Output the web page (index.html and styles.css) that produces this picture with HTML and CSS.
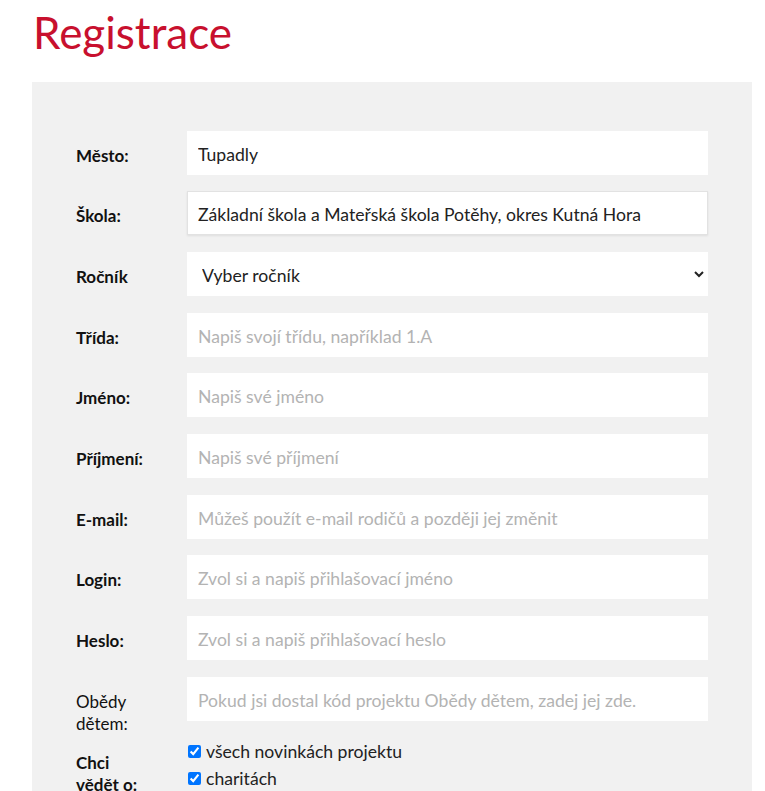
FILE: index.html
```html
<!DOCTYPE html>
<html lang="cs">
<head>
<meta charset="utf-8">
<title>Registrace</title>
<link rel="stylesheet" href="styles.css">
</head>
<body>
<h1 class="title">Registrace</h1>
<div class="panel">
  <form class="form">
    <label class="lbl">Město:</label>
    <input class="field" type="text" value="Tupadly">

    <label class="lbl">Škola:</label>
    <input class="field field-focus" type="text" value="Základní škola a Mateřská škola Potěhy, okres Kutná Hora">

    <label class="lbl">Ročník</label>
    <select class="field select">
      <option>Vyber ročník</option>
    </select>

    <label class="lbl">Třída:</label>
    <input class="field" type="text" placeholder="Napiš svojí třídu, například 1.A">

    <label class="lbl">Jméno:</label>
    <input class="field" type="text" placeholder="Napiš své jméno">

    <label class="lbl">Příjmení:</label>
    <input class="field" type="text" placeholder="Napiš své příjmení">

    <label class="lbl">E-mail:</label>
    <input class="field" type="text" placeholder="Můžeš použít e-mail rodičů a později jej změnit">

    <label class="lbl">Login:</label>
    <input class="field" type="text" placeholder="Zvol si a napiš přihlašovací jméno">

    <label class="lbl">Heslo:</label>
    <input class="field" type="password" placeholder="Zvol si a napiš přihlašovací heslo">

    <label class="lbl lbl-normal">Obědy dětem:</label>
    <input class="field" type="text" placeholder="Pokud jsi dostal kód projektu Obědy dětem, zadej jej zde.">

    <label class="lbl lbl-check">Chci vědět o:</label>
    <div class="checks">
      <label class="check"><input type="checkbox" checked> všech novinkách projektu</label>
      <label class="check"><input type="checkbox" checked> charitách</label>
      <label class="check"><input type="checkbox" checked> soutěžích</label>
    </div>
  </form>
</div>
</body>
</html>
```
FILE: styles.css
```css
html, body {
  margin: 0;
  padding: 0;
  background: #ffffff;
  font-family: Lato, "Open Sans", sans-serif;
  color: #1f1f1f;
}

.title {
  margin: 6px 0 23px 33px;
  font-size: 44px;
  font-weight: 400;
  line-height: 1.2;
  color: #c8102e;
}

.panel {
  margin-left: 32px;
  width: 720px;
  background: #f1f1f1;
  padding: 49px 44px 40px;
  box-sizing: border-box;
}

.form {
  display: grid;
  grid-template-columns: 74px 1fr;
  column-gap: 37px;
  row-gap: 16.67px;
}

.lbl {
  font-size: 17px;
  font-weight: 700;
  line-height: 22px;
  padding-top: 14px;
  color: #111111;
}

.lbl-normal {
  font-weight: 400;
  margin-bottom: -15px;
}

.lbl-check {
  padding-top: 15px;
}

.field {
  height: 44px;
  box-sizing: border-box;
  border: 1px solid #ffffff;
  background: #ffffff;
  padding: 3px 10px 0;
  font-family: Lato, "Open Sans", sans-serif;
  font-size: 17.6px;
  color: #222222;
  outline: none;
  border-radius: 0;
  width: 100%;
  margin: 0;
}

.field::placeholder {
  color: #b3b3b3;
  opacity: 1;
}

.field-focus {
  border-color: #e2e2e2;
  box-shadow: 0 1px 2px rgba(0, 0, 0, 0.08);
}

.select {
  padding-left: 10px;
  padding-right: 8px;
}

.checks {
  display: flex;
  flex-direction: column;
  padding-top: 1px;
}

.check {
  display: flex;
  align-items: center;
  height: 27px;
  font-size: 17.6px;
  color: #222222;
}

.check input {
  width: 13px;
  height: 13px;
  margin: 0 5px 0 1px;
  accent-color: #0075ff;
}
```
